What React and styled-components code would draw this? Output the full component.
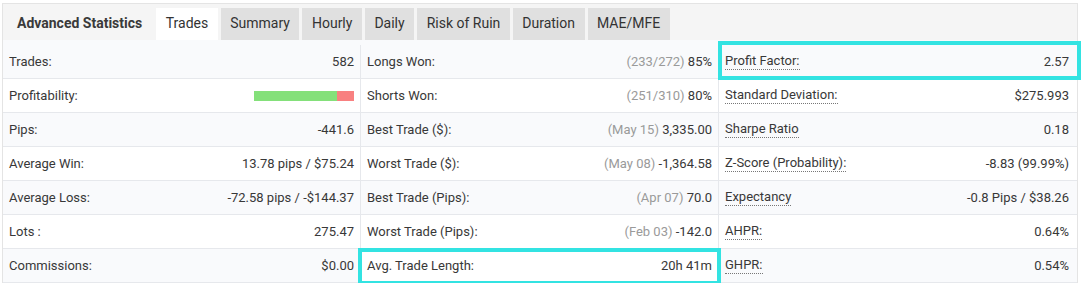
import React from "react";
import styled, { createGlobalStyle } from "styled-components";

const GlobalStyle = createGlobalStyle`
  body {
    margin: 0;
    background: #fff;
    font-family: Roboto, "Liberation Sans", Arial, sans-serif;
    color: #333;
  }
`;

const Panel = styled.div`
  margin: 3px 4px 0 2px;
  border: 1px solid #e4e4e4;
  border-bottom: none;
`;

const TabBar = styled.div`
  display: flex;
  align-items: flex-end;
  gap: 3px;
  height: 36px;
  background: #f5f5f5;
  padding-left: 2px;
`;

const Title = styled.div`
  font-size: 14px;
  font-weight: 700;
  color: #3a3a3a;
  padding: 0 11px 0 12px;
  height: 32px;
  line-height: 31px;
`;

const Tab = styled.div`
  height: 32px;
  line-height: 31px;
  padding: 0 9.5px;
  font-size: 14px;
  color: #333;
  background: ${(p) => (p.active ? "#fff" : "#e0e0e0")};
`;

const Body = styled.div`
  background: #f9fafc;
  padding-top: 5px;
`;

const Row = styled.div`
  display: grid;
  grid-template-columns: 357px 358px 1fr;
  background: ${(p) => (p.odd ? "#f9fafc" : "#fff")};
`;

const Cell = styled.div`
  position: relative;
  display: flex;
  align-items: center;
  justify-content: space-between;
  height: 33px;
  padding: 0 ${(p) => (p.last ? 8 : 6)}px 0 6px;
  border-bottom: 1px solid #e6e8ec;
  border-left: ${(p) => (p.first ? "none" : "1px solid #e6e8ec")};
  font-size: 13px;
  color: #383838;
  background: ${(p) => (p.plain ? "#fff" : "transparent")};
`;

const Label = styled.span`
  border-bottom: ${(p) => (p.dotted ? "1px dotted #777" : "none")};
  line-height: 15px;
  padding-bottom: ${(p) => (p.dotted ? "1px" : "0")};
`;

const Value = styled.span`
  white-space: nowrap;
`;

const Muted = styled.span`
  color: #9a9a9a;
`;

const Bar = styled.div`
  display: flex;
  width: 100px;
  height: 10px;
  background: #f88080;
`;

const BarFill = styled.div`
  height: 100%;
  background: #84e07a;
`;

const Highlight = styled.div`
  position: absolute;
  top: ${(p) => p.t}px;
  bottom: ${(p) => p.b}px;
  left: ${(p) => p.l}px;
  right: ${(p) => p.r}px;
  border: 4px solid #33e3e2;
  pointer-events: none;
  z-index: 2;
`;

const tabs = ["Trades", "Summary", "Hourly", "Daily", "Risk of Ruin", "Duration", "MAE/MFE"];

const rows = [
  [
    { label: "Trades:", value: "582" },
    { label: "Longs Won:", muted: "(233/272)", value: "85%" },
    { label: "Profit Factor:", value: "2.57", dotted: true, hl: { t: -4, b: -2, l: -1, r: -4 } },
  ],
  [
    { label: "Profitability:", bar: 83 },
    { label: "Shorts Won:", muted: "(251/310)", value: "80%" },
    { label: "Standard Deviation:", value: "$275.993", dotted: true },
  ],
  [
    { label: "Pips:", value: "-441.6" },
    { label: "Best Trade ($):", muted: "(May 15)", value: "3,335.00" },
    { label: "Sharpe Ratio", value: "0.18", dotted: true },
  ],
  [
    { label: "Average Win:", value: "13.78 pips / $75.24" },
    { label: "Worst Trade ($):", muted: "(May 08)", value: "-1,364.58" },
    { label: "Z-Score (Probability):", value: "-8.83 (99.99%)", dotted: true },
  ],
  [
    { label: "Average Loss:", value: "-72.58 pips / -$144.37" },
    { label: "Best Trade (Pips):", muted: "(Apr 07)", value: "70.0" },
    { label: "Expectancy", value: "-0.8 Pips / $38.26", dotted: true },
  ],
  [
    { label: "Lots :", value: "275.47" },
    { label: "Worst Trade (Pips):", muted: "(Feb 03)", value: "-142.0" },
    { label: "AHPR:", value: "0.64%", dotted: true },
  ],
  [
    { label: "Commissions:", value: "$0.00" },
    { label: "Avg. Trade Length:", value: "20h 41m", plain: true, hl: { t: -1, b: -3, l: -3, r: -3 } },
    { label: "GHPR:", value: "0.54%", dotted: true },
  ],
];

export default function App() {
  return (
    <>
      <GlobalStyle />
      <Panel>
        <TabBar>
          <Title>Advanced Statistics</Title>
          {tabs.map((t) => (
            <Tab key={t} active={t === "Trades"}>
              {t}
            </Tab>
          ))}
        </TabBar>
        <Body>
          {rows.map((row, i) => (
            <Row key={i} odd={i % 2 === 0}>
              {row.map((c, j) => (
                <Cell key={j} first={j === 0} last={j === 2} plain={c.plain}>
                  <Label dotted={c.dotted}>{c.label}</Label>
                  {c.bar ? (
                    <Bar>
                      <BarFill style={{ width: `${c.bar}%` }} />
                    </Bar>
                  ) : (
                    <Value>
                      {c.muted && <Muted>{c.muted} </Muted>}
                      {c.value}
                    </Value>
                  )}
                  {c.hl && <Highlight {...c.hl} />}
                </Cell>
              ))}
            </Row>
          ))}
        </Body>
      </Panel>
    </>
  );
}
